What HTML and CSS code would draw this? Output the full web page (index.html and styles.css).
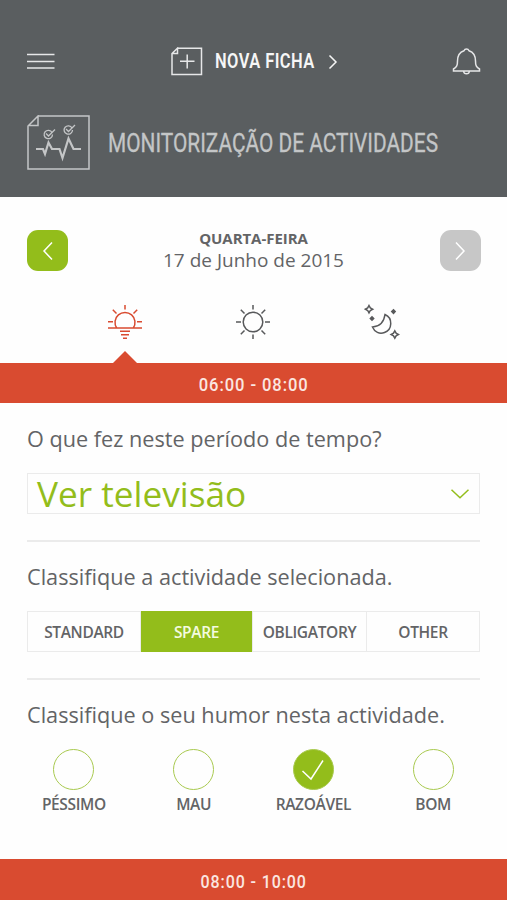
FILE: index.html
```
<!DOCTYPE html>
<html lang="pt">
<head>
    <meta charset="UTF-8">
    <meta name="viewport" content="width=device-width, initial-scale=1.0">
    <title>Monitorização de Actividades</title>
    <link rel="stylesheet" href="styles.css">
</head>
<body>
    <header class="header">
        <nav class="topbar">
            <svg class="menu-icon" width="28" height="17" viewBox="0 0 28 17">
                <path d="M0 1.500H27.500M0 8.500H27.500M0 15H27.500"/>
            </svg>
            <div class="new-sheet">
                <svg width="32" height="29" viewBox="0 0 32 29">
                    <path d="M6.500 1.200H30.500V27.500H1V6.500L6.500 1.200V6.500H1M16.200 7.500V21.500M9 14.200H23.500"/>
                </svg>
                <span class="new-label"><span class="squeeze">NOVA FICHA</span></span>
                <svg class="new-chevron" width="10" height="16" viewBox="0 0 10 16">
                    <path d="M1.500 1.500L8 8L1.500 14.500"/>
                </svg>
            </div>
            <svg class="bell-icon" width="29" height="29" viewBox="0 0 29 29">
                <path d="M1.500 24V22C4.800 20 5.500 18.500 5.500 14C5.500 8.500 8 5 12 3.700C13 1.300 16 1.300 17 3.700C21 5 23.500 8.500 23.500 14C23.500 18.500 24.200 20 27.500 22V24ZM11.500 24C12 27.800 17 27.800 17.500 24"/>
            </svg>
        </nav>
        <div class="title-row">
            <svg width="63" height="55" viewBox="0 0 63 55">
                <path d="M11 1H62V54H1V11L11 1V10.500H1"/>
                <path class="pulse" d="M9 34H16L18 39L21.500 27.500L25 34H32.500L35.500 43L41.500 23.500L46.500 34H54"/>
                <path class="ticks" d="M25 17.500A4.200 4.200 0 1 0 25.500 19.500M19 18.500L21.500 21L28 14.500M45 13A4.200 4.200 0 1 0 45.500 15M39 14L41.500 16.500L48 10"/>
            </svg>
            <h1 class="title"><span class="squeeze">MONITORIZAÇÃO DE ACTIVIDADES</span></h1>
        </div>
    </header>

    <main>
        <section class="date-row">
            <button class="arrow">
                <svg width="12" height="20" viewBox="0 0 12 20"><path d="M10 1.500L2 10L10 18.500"/></svg>
            </button>
            <div class="date">
                <strong>QUARTA-FEIRA</strong>
                <span>17 de Junho de 2015</span>
            </div>
            <button class="arrow disabled">
                <svg width="12" height="20" viewBox="0 0 12 20"><path d="M2 1.500L10 10L2 18.500"/></svg>
            </button>
        </section>

        <section class="periods">
            <div class="period active">
                <svg width="36" height="36" viewBox="0 0 36 36">
                    <path d="M9.700 24A10 10 0 1 1 26.300 24M1 24H35M13 27.200H23M14 30.700H22M16 34.200H20M18 1V5.500M5.800 5.800L9.500 9.500M30.200 5.800L26.500 9.500M1 17.800H6M30 17.800H35"/>
                </svg>
            </div>
            <div class="period">
                <svg width="36" height="36" viewBox="0 0 36 36">
                    <circle cx="18" cy="18" r="9.800"/>
                    <path d="M18 1V5.500M18 30.500V35M1 18H6M30 18H35M5.800 5.800L9.500 9.500M30.200 5.800L26.500 9.500M5.800 30.200L9.500 26.500M30.200 30.200L26.500 26.500"/>
                </svg>
            </div>
            <div class="period">
                <svg width="36" height="36" viewBox="0 0 36 36">
                    <path d="M21 10.500C20 18 15.500 22.500 8.500 23C10.500 28 15.500 30.500 20.500 28.500C28.500 25.500 29 14 21 10.500Z"/>
                    <path d="M5 1.500L6.300 3.900L8.700 5.200L6.300 6.500L5 8.900L3.700 6.500L1.300 5.200L3.700 3.900ZM30.800 26.800L32.100 29.200L34.500 30.500L32.100 31.800L30.800 34.200L29.500 31.800L27.100 30.500L29.500 29.200Z"/>
                    <path class="star" d="M29.500 4.800L32.200 7.600L29.500 10.400L26.700 7.600ZM8 11.800L10.700 14.500L8 17.200L5.300 14.500Z"/>
                </svg>
            </div>
        </section>

        <div class="time-bar current"><span class="squeeze">06:00 - 08:00</span></div>

        <div class="form">
            <section class="question activity">
                <h2>O que fez neste período de tempo?</h2>
                <div class="select">
                    <span>Ver televisão</span>
                    <svg width="20" height="12" viewBox="0 0 20 12"><path d="M1.500 1.800L10 9.800L18.500 1.800"/></svg>
                </div>
            </section>

            <section class="question classify">
                <h2>Classifique a actividade selecionada.</h2>
                <div class="segments">
                    <button class="segment">STANDARD</button>
                    <button class="segment selected">SPARE</button>
                    <button class="segment">OBLIGATORY</button>
                    <button class="segment">OTHER</button>
                </div>
            </section>

            <section class="question mood">
                <h2>Classifique o seu humor nesta actividade.</h2>
                <div class="moods">
                    <div class="mood-option"><span class="circle"></span>PÉSSIMO</div>
                    <div class="mood-option"><span class="circle"></span>MAU</div>
                    <div class="mood-option">
                        <span class="circle checked">
                            <svg width="24" height="22" viewBox="0 0 24 22"><path d="M1.500 12L10 20L22 1.500"/></svg>
                        </span>RAZOÁVEL
                    </div>
                    <div class="mood-option"><span class="circle"></span>BOM</div>
                </div>
            </section>
        </div>

        <div class="time-bar next"><span class="squeeze">08:00 - 10:00</span></div>
    </main>
</body>
</html>
```
FILE: styles.css
```
/* General Reset */
* {
    margin: 0;
    padding: 0;
    box-sizing: border-box;
}

body {
    width: 507px;
    height: 900px;
    overflow: hidden;
    background-color: #fefefe;
    color: #636466;
    font-family: 'Open Sans', sans-serif;
}

svg {
    display: block;
    flex: none;
    fill: none;
    stroke: currentColor;
    stroke-width: 1.5;
}

button {
    border: none;
    font-family: inherit;
}

/* Narrow headings */
.squeeze {
    display: inline-block;
    font-family: Roboto, sans-serif;
    white-space: nowrap;
}

/* Header */
.header {
    height: 197px;
    padding: 47px 26px 0 27px;
    background-color: #5a5e60;
    color: #c4c6c7;
}

.topbar {
    display: flex;
    align-items: center;
    justify-content: space-between;
    height: 29px;
    color: #e6e7e8;
}

.new-sheet {
    display: flex;
    align-items: center;
    margin-left: 1px;
}

.new-label {
    width: 100px;
    margin: 0 13px 0 12px;
    color: #f6f6f6;
    font-size: 19.5px;
    line-height: 28px;
}

.new-label .squeeze {
    font-weight: 600;
    letter-spacing: 0.5px;
    transform: scaleX(0.845);
    transform-origin: left;
}

.new-chevron {
    color: #f6f6f6;
}

.title-row {
    display: flex;
    align-items: center;
    margin-top: 39px;
}

.pulse {
    stroke-width: 2.2;
}

.ticks {
    stroke-width: 1.3;
}

.title {
    margin-left: 18px;
    font-size: 25px;
    font-weight: 400;
    line-height: 30px;
}

.title .squeeze {
    -webkit-text-stroke: 0.3px;
    transform: scaleX(0.834);
    transform-origin: left;
}

/* Date */
.date-row {
    display: flex;
    justify-content: space-between;
    padding: 33px 26px 0 27px;
    height: 107px;
}

.arrow {
    display: flex;
    align-items: center;
    justify-content: center;
    width: 41px;
    height: 41px;
    border-radius: 11px;
    background-color: #93bd1b;
    color: #fff;
}

.arrow.disabled {
    background-color: #c7c7c7;
}

.date {
    display: flex;
    flex-direction: column;
    align-items: center;
    margin-left: -1px;
    font-size: 19px;
    line-height: 27px;
}

.date strong {
    font-size: 15px;
    letter-spacing: -0.05px;
    line-height: 17px;
}

/* Period tabs */
.periods {
    display: grid;
    grid-template-columns: repeat(3, 1fr);
    height: 59px;
    padding: 0 61px;
}

.period {
    display: flex;
    justify-content: center;
    color: #58595b;
}

.period.active {
    color: #d94b30;
}

.period .star {
    fill: currentColor;
    stroke: none;
}

/* Time bars */
.time-bar {
    position: relative;
    height: 40px;
    background-color: #d94b30;
    color: #fbe6e0;
    font-size: 18px;
    line-height: 42px;
    text-align: center;
}

.time-bar .squeeze {
    font-weight: 500;
    letter-spacing: 1px;
    transform: scaleX(0.92);
}

.time-bar.current::before {
    content: '';
    position: absolute;
    top: -12px;
    left: 113px;
    border: solid transparent;
    border-width: 0 12px 12px;
    border-bottom-color: #d94b30;
}

.time-bar.next {
    height: 41px;
    line-height: 44px;
}

.time-bar.next .squeeze {
    transform: scaleX(0.89);
}

/* Questions */
.form {
    height: 456px;
    padding: 0 27px;
}

.question {
    height: 138px;
    padding-top: 21px;
    border-bottom: 2px solid #ebebeb;
}

.question.activity {
    height: 139px;
    padding-top: 22px;
}

.question.mood {
    border: none;
}

.question h2 {
    font-size: 21.67px;
    font-weight: 400;
    line-height: 28px;
    white-space: nowrap;
}

.select {
    display: flex;
    align-items: center;
    justify-content: space-between;
    height: 41px;
    margin-top: 20px;
    padding: 0 9px;
    border: 1px solid #ebebeb;
    color: #93bd1b;
    font-size: 35.2px;
    line-height: 38px;
}

.select span {
    padding-bottom: 2px;
}

.segments {
    display: grid;
    grid-template-columns: 113px 112px 114px 1fr;
    height: 41px;
    margin-top: 20px;
    border: 1px solid #ebebeb;
}

.segment {
    background: none;
    border-right: 1px solid #ebebeb;
    color: #636466;
    font-size: 15.5px;
    font-weight: 600;
    letter-spacing: -0.35px;
}

.segment:last-child {
    border-right: none;
}

.segment.selected {
    margin: -1px 0;
    background-color: #93bd1b;
    color: #f4fbe0;
}

/* Mood options */
.moods {
    display: grid;
    grid-template-columns: repeat(4, 1fr);
    margin: 20px -13px 0;
}

.mood-option {
    display: flex;
    flex-direction: column;
    align-items: center;
    font-size: 15.5px;
    font-weight: 600;
    letter-spacing: -0.35px;
    line-height: 29px;
}

.circle {
    display: flex;
    align-items: center;
    justify-content: center;
    width: 41px;
    height: 41px;
    border: 1px solid #a9ca50;
    border-radius: 50%;
}

.circle.checked {
    background-color: #93bd1b;
    color: #fff;
}
```
